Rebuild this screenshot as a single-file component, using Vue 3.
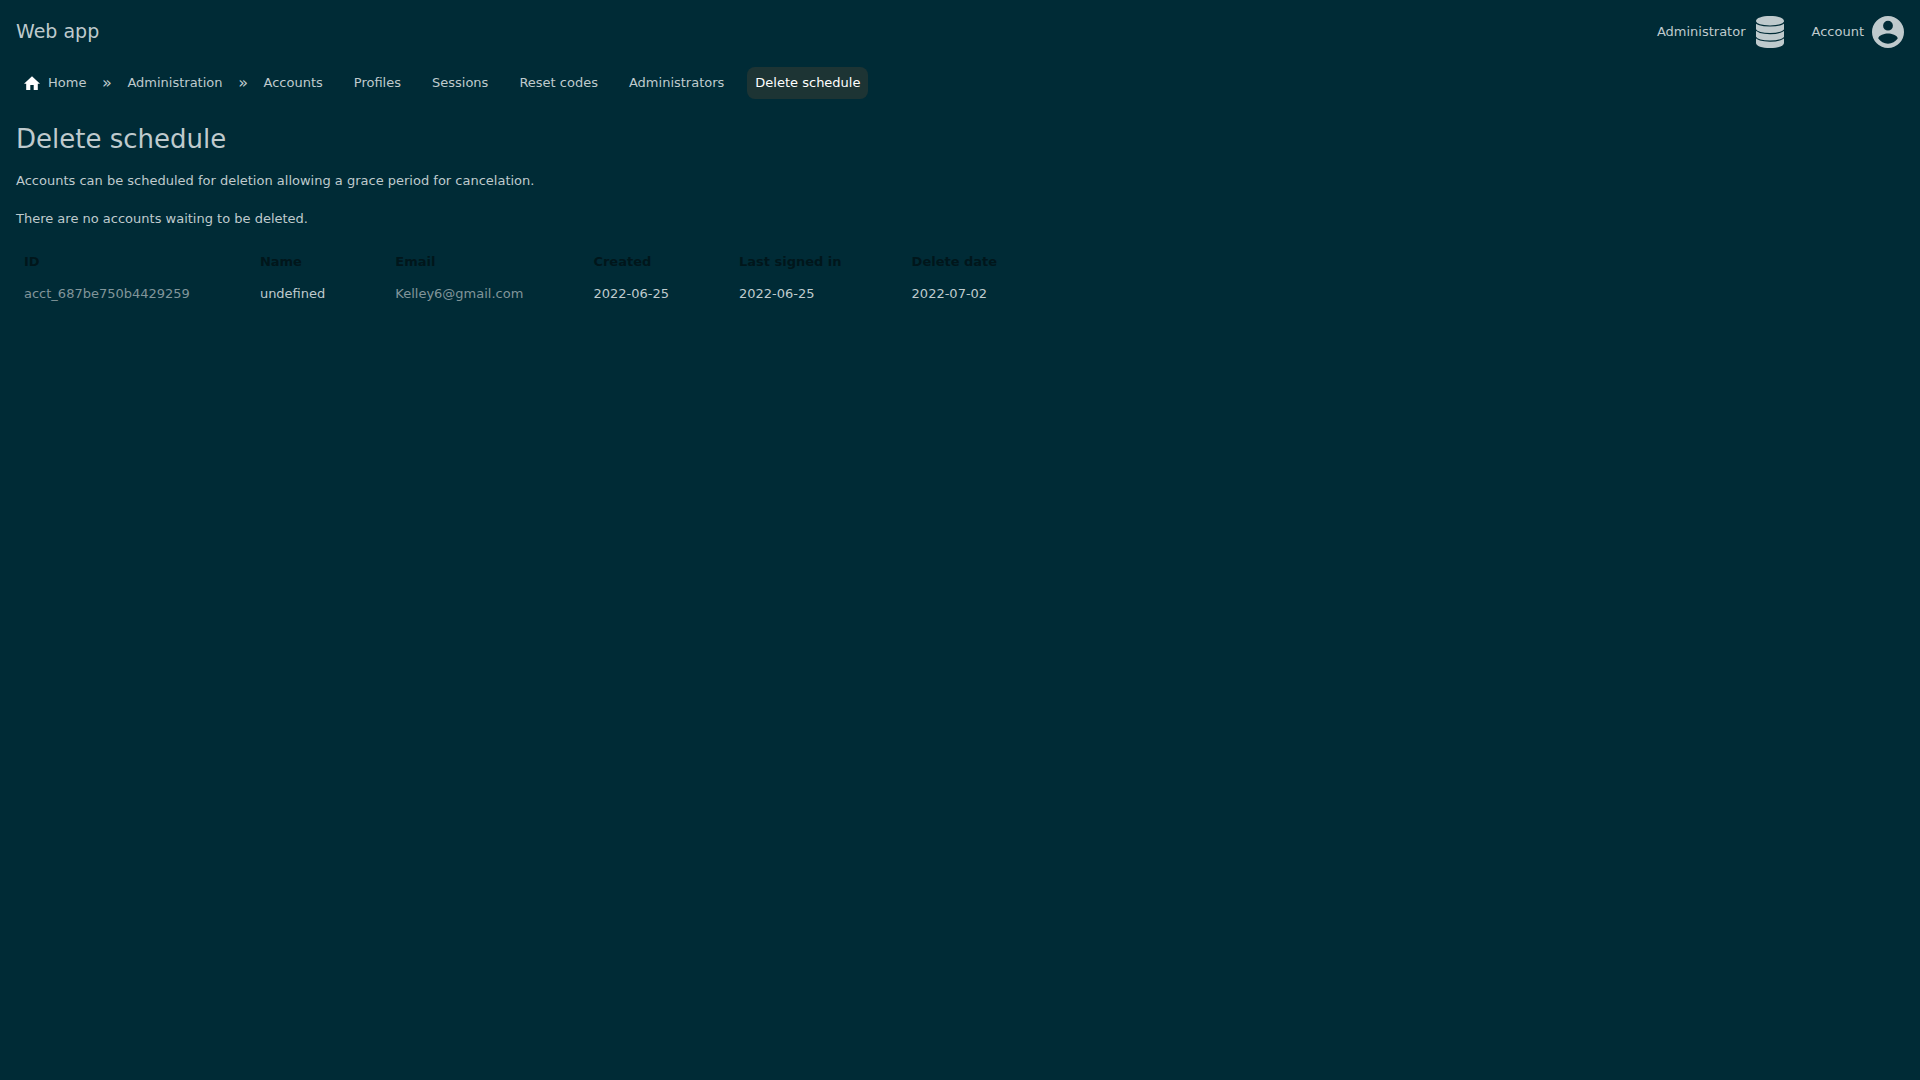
<script setup>
const sections = [
  { label: 'Accounts' },
  { label: 'Profiles' },
  { label: 'Sessions' },
  { label: 'Reset codes' },
  { label: 'Administrators' },
  { label: 'Delete schedule', current: true },
]

const columns = ['ID', 'Name', 'Email', 'Created', 'Last signed in', 'Delete date']

const accounts = [
  {
    id: 'acct_687be750b4429259',
    name: 'undefined',
    email: 'Kelley6@gmail.com',
    created: '2022-06-25',
    lastSignedIn: '2022-06-25',
    deleteDate: '2022-07-02',
  },
]
</script>

<template>
  <div class="page">
    <header class="header">
      <a class="brand" href="#">Web app</a>
      <div class="menus">
        <button class="menu" type="button">
          <span>Administrator</span>
          <svg class="menu-icon" viewBox="0 0 32 32" aria-hidden="true">
            <path d="M2 5C2 2 8 0 16 0s14 2 14 5v22c0 3-6 5-14 5S2 30 2 27z" />
            <g class="bands">
              <path d="M1 5c1 3.200 7 5 15 5s14-1.800 15-5" />
              <path d="M1 13c2 3.200 8 4.600 15 4.600s13-1.400 15-4.600" />
              <path d="M1 20.500c2 3.200 8 4.600 15 4.600s13-1.400 15-4.600" />
            </g>
          </svg>
        </button>
        <button class="menu" type="button">
          <span>Account</span>
          <svg class="menu-icon" viewBox="0 0 32 32" aria-hidden="true">
            <path
              fill-rule="evenodd"
              d="M16 0a16 16 0 1 0 0 32 16 16 0 0 0 0-32zm0 4.800a4.900 4.900 0 1 1 0 9.800 4.900 4.900 0 0 1 0-9.800zm0 23c-4 0-7.600-2.100-9.700-5.200.1-3.200 6.500-5 9.700-5s9.600 1.800 9.700 5c-2.100 3.100-5.700 5.200-9.700 5.200z"
            />
          </svg>
        </button>
      </div>
    </header>

    <nav class="nav" aria-label="Sections">
      <a class="crumb" href="#">
        <svg class="home-icon" viewBox="0 0 16 16" aria-hidden="true">
          <path d="M8 1.200l8 7.500h-2.200V15H9.700v-5H6.300v5H2.200V8.700H0z" />
        </svg>
        Home
      </a>
      <span class="separator">»</span>
      <a class="crumb" href="#">Administration</a>
      <span class="separator">»</span>
      <ul class="sections">
        <li v-for="section in sections" :key="section.label">
          <a class="crumb" :class="{ current: section.current }" href="#">{{ section.label }}</a>
        </li>
      </ul>
    </nav>

    <main class="content">
      <h1>Delete schedule</h1>
      <p>Accounts can be scheduled for deletion allowing a grace period for cancelation.</p>
      <p>There are no accounts waiting to be deleted.</p>
      <table>
        <thead>
          <tr>
            <th v-for="column in columns" :key="column" scope="col">{{ column }}</th>
          </tr>
        </thead>
        <tbody>
          <tr v-for="account in accounts" :key="account.id">
            <td><a href="#">{{ account.id }}</a></td>
            <td>{{ account.name }}</td>
            <td><a href="#">{{ account.email }}</a></td>
            <td>{{ account.created }}</td>
            <td>{{ account.lastSignedIn }}</td>
            <td>{{ account.deleteDate }}</td>
          </tr>
        </tbody>
      </table>
    </main>
  </div>
</template>

<style>
body {
  margin: 0;
  background: #002b36;
}
</style>

<style scoped>
.page {
  color: #bfcacd;
  font-family: "DejaVu Sans", sans-serif;
  font-size: 13px;
  line-height: 16px;
}

a {
  color: inherit;
  text-decoration: none;
}

.header {
  display: flex;
  align-items: flex-start;
  justify-content: space-between;
  padding: 16px;
}

.brand {
  font-size: 19px;
  line-height: 30px;
}

.menus {
  display: flex;
  gap: 26px;
}

.menu {
  display: flex;
  align-items: center;
  gap: 8px;
  padding: 0;
  border: 0;
  background: none;
  color: inherit;
  font: inherit;
  line-height: 32px;
  cursor: pointer;
}

.menu-icon {
  width: 32px;
  height: 32px;
  fill: currentColor;
}

.bands {
  fill: none;
  stroke: #002b36;
  stroke-width: 1.2;
}

.nav {
  display: flex;
  align-items: center;
  padding: 3px 16px;
}

.crumb {
  display: flex;
  align-items: center;
  gap: 8px;
  padding: 8px;
  border-radius: 8px;
}

.current {
  background: #1d3434;
  color: #fff;
}

.home-icon {
  width: 16px;
  height: 16px;
  fill: #fff;
}

.separator {
  width: 25px;
  font-size: 16px;
  text-align: center;
}

.sections {
  display: flex;
  gap: 15px;
  margin: 0;
  padding: 0;
  list-style: none;
}

.content {
  padding: 20px 16px;
}

h1 {
  margin: 0 0 14px;
  font-size: 26px;
  font-weight: 400;
  line-height: 34px;
}

p {
  margin: 0 0 16px;
  line-height: 22px;
}

table {
  border-collapse: collapse;
}

th,
td {
  padding: 8px 62px 8px 8px;
  text-align: left;
  white-space: nowrap;
}

th {
  color: #00161b;
}

td a {
  color: #80959a;
}
</style>
